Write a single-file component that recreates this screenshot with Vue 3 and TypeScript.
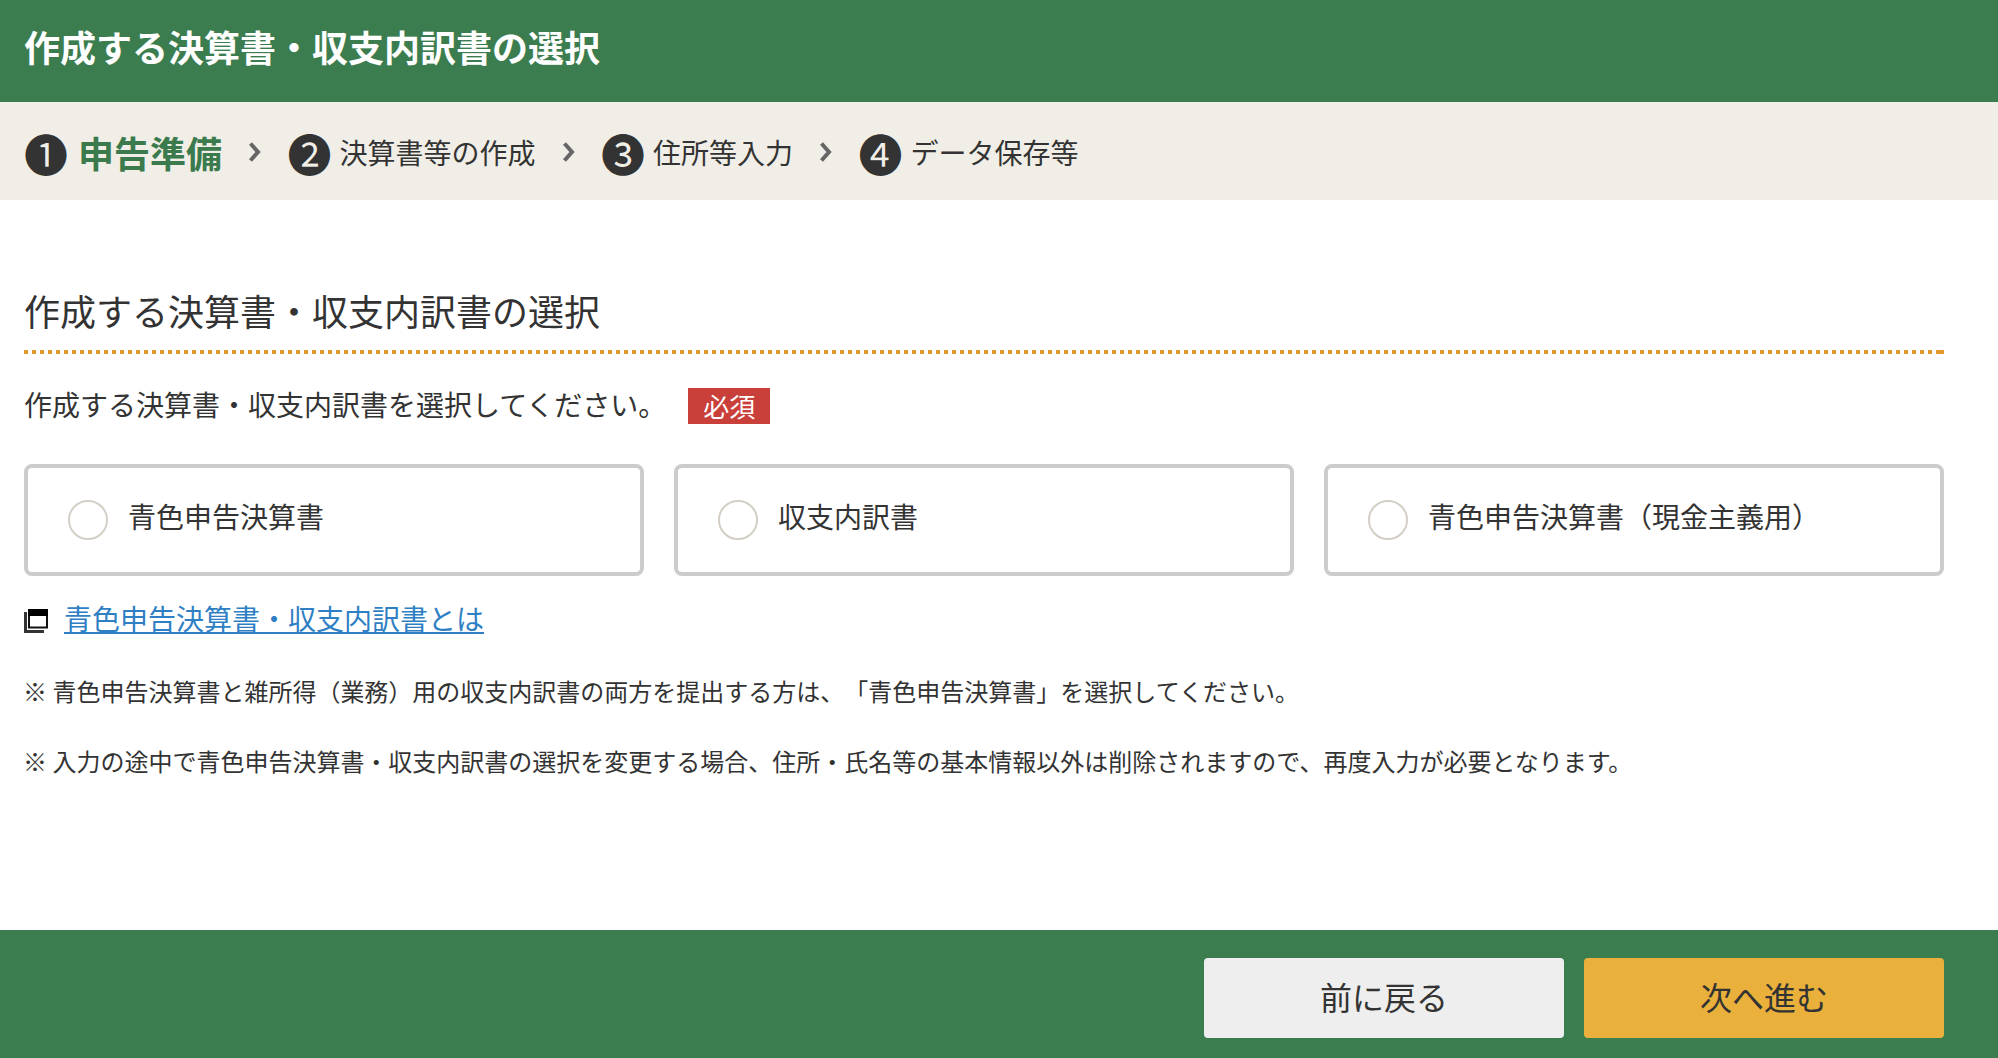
<script setup lang="ts">
const steps = [
  { no: '❶', label: '申告準備', active: true },
  { no: '❷', label: '決算書等の作成', active: false },
  { no: '❸', label: '住所等入力', active: false },
  { no: '❹', label: 'データ保存等', active: false },
]

const options = ['青色申告決算書', '収支内訳書', '青色申告決算書（現金主義用）']

const notes = [
  '※ 青色申告決算書と雑所得（業務）用の収支内訳書の両方を提出する方は、「青色申告決算書」を選択してください。',
  '※ 入力の途中で青色申告決算書・収支内訳書の選択を変更する場合、住所・氏名等の基本情報以外は削除されますので、再度入力が必要となります。',
]
</script>

<template>
  <div class="page">
    <header class="head">
      <h1>作成する決算書・収支内訳書の選択</h1>
    </header>

    <nav class="steps">
      <template v-for="(s, i) in steps" :key="s.no">
        <svg v-if="i > 0" class="chev" viewBox="0 0 12 20" aria-hidden="true">
          <path d="M1.5 1.5 9 10 1.5 18.5" />
        </svg>
        <div class="step" :class="{ active: s.active }">
          <span class="num">{{ s.no }}</span>
          <span class="label">{{ s.label }}</span>
        </div>
      </template>
    </nav>

    <main class="main">
      <h2>作成する決算書・収支内訳書の選択</h2>
      <div class="lead">
        <span class="lead-text">作成する決算書・収支内訳書を選択してください。</span>
        <span class="req">必須</span>
      </div>

      <div class="cards">
        <label v-for="o in options" :key="o" class="card">
          <input type="radio" name="kind" />
          <span>{{ o }}</span>
        </label>
      </div>

      <div class="more">
        <svg class="win" viewBox="0 0 24 24" aria-hidden="true">
          <path d="M1.5 3v19.5H20" fill="none" stroke="#333" stroke-width="3" />
          <rect x="5" y="1" width="18" height="17.5" fill="#fff" stroke="#111" stroke-width="2" />
          <rect x="4" y="0" width="20" height="7" fill="#000" />
        </svg>
        <a href="#">青色申告決算書・収支内訳書とは</a>
      </div>

      <p v-for="n in notes" :key="n" class="note">{{ n }}</p>
    </main>

    <footer class="foot">
      <button class="btn back" type="button">前に戻る</button>
      <button class="btn next" type="button">次へ進む</button>
    </footer>
  </div>
</template>

<style scoped>
.page {
  display: flex;
  flex-direction: column;
  min-height: 1058px;
  color: #333;
  font-family: "Noto Sans CJK JP", "Noto Sans", sans-serif;
  text-spacing-trim: space-all;
}
.head {
  height: 102px;
  padding: 20px 24px 0;
  box-sizing: border-box;
  background: #3c7d50;
}
.head h1 {
  margin: 0;
  color: #fff;
  font-size: 36px;
  line-height: 52px;
  font-weight: 700;
}
.steps {
  display: flex;
  align-items: center;
  height: 98px;
  padding: 4px 0 0 26px;
  box-sizing: border-box;
  background: #f0eee6;
}
.step {
  display: flex;
  align-items: center;
  gap: 10px;
}
.num {
  display: flex;
  align-items: center;
  justify-content: center;
  width: 40px;
  height: 40px;
  color: #333;
  font-size: 44px;
  line-height: 40px;
}
.label {
  margin-top: -2px;
  font-size: 28px;
  line-height: 40px;
}
.step.active {
  gap: 12px;
}
.step.active .label {
  color: #3a7a4d;
  font-size: 36px;
  font-weight: 700;
}
.chev {
  width: 12px;
  height: 20px;
  margin: -2px 28.5px 0 27px;
}
.chev path {
  fill: none;
  stroke: #666;
  stroke-width: 4;
}
.main {
  flex: 1;
  padding: 84px 54px 0 24px;
}
.main h2 {
  margin: 0;
  height: 70px;
  font-size: 36px;
  line-height: 52px;
  font-weight: 400;
  background:
    linear-gradient(#e3982e, #e3982e) right bottom / 4px 4px no-repeat,
    repeating-linear-gradient(90deg, #e3982e 0 4px, transparent 4px 8px) left bottom / 100% 4px no-repeat;
}
.lead {
  display: flex;
  align-items: center;
  gap: 22px;
  margin-top: 34px;
  height: 36px;
  font-size: 28px;
}
.lead-text {
  margin-bottom: 4px;
}
.req {
  width: 82px;
  height: 36px;
  background: #c9403b;
  color: #fff;
  font-size: 26px;
  line-height: 35px;
  text-align: center;
}
.cards {
  display: grid;
  grid-template-columns: repeat(3, 620px);
  gap: 30px;
  margin-top: 40px;
}
.card {
  display: flex;
  align-items: center;
  gap: 20px;
  height: 112px;
  padding-left: 40px;
  box-sizing: border-box;
  border: 4px solid #ccc;
  border-radius: 8px;
  font-size: 28px;
}
.card span {
  margin-top: -8px;
}
.card input {
  appearance: none;
  flex: none;
  width: 40px;
  height: 40px;
  margin: 0;
  border: 2px solid #d3cfc5;
  border-radius: 50%;
  background: #fff;
}
.more {
  display: flex;
  align-items: center;
  gap: 16px;
  margin-top: 20px;
  height: 44px;
}
.win {
  width: 24px;
  height: 24px;
  margin-top: 6px;
}
.more a {
  color: #2f7fc4;
  font-size: 28px;
  line-height: 44px;
  text-decoration: underline;
}
.note {
  margin: 0 0 0 -1px;
  font-size: 24px;
  line-height: 36px;
}
.more + .note {
  margin-top: 33px;
}
.note + .note {
  margin-top: 34px;
}
.foot {
  display: flex;
  justify-content: flex-end;
  gap: 20px;
  height: 128px;
  padding: 28px 54px 20px 0;
  box-sizing: border-box;
  background: #3c7d50;
}
.btn {
  width: 360px;
  height: 80px;
  padding: 0 0 5px;
  border: 0;
  border-radius: 4px;
  color: #333;
  font-family: inherit;
  font-size: 32px;
}
.back {
  background: #eee;
}
.next {
  background: #e9b03b;
}
</style>
